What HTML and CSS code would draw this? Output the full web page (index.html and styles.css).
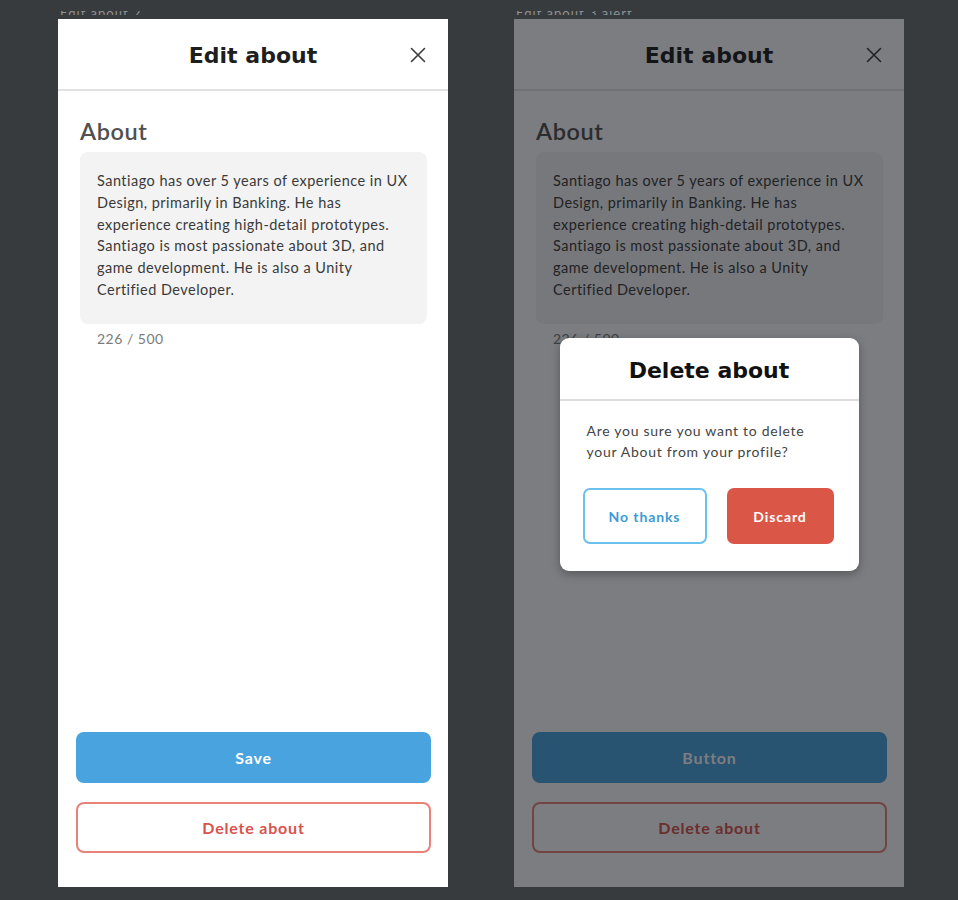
FILE: index.html
```html
<!DOCTYPE html>
<html lang="en">
<head>
<meta charset="utf-8">
<title>Edit about</title>
<link rel="stylesheet" href="styles.css">
</head>
<body>
<div class="board">
  <section class="col">
    <div class="frame-label">Edit about 2</div>
    <div class="frame">
      <header class="top">
        <h1 class="title">Edit about</h1>
        <button class="close" aria-label="Close">
          <svg width="16" height="16" viewBox="0 0 16 16"><path d="M1.5 1.5L14.5 14.5M14.5 1.5L1.5 14.5" stroke="#3a3a3a" stroke-width="1.6" stroke-linecap="round"/></svg>
        </button>
      </header>
      <div class="content">
        <h2 class="section">About</h2>
        <div class="textarea">Santiago has over 5 years of experience in UX Design, primarily in Banking. He has experience creating high-detail prototypes. Santiago is most passionate about 3D, and game development. He is also a Unity Certified Developer.</div>
        <div class="counter">226 / 500</div>
        <div class="actions">
          <button class="btn primary">Save</button>
          <button class="btn danger-outline">Delete about</button>
        </div>
      </div>
    </div>
  </section>

  <section class="col">
    <div class="frame-label">Edit about 3 alert</div>
    <div class="frame">
      <header class="top">
        <h1 class="title">Edit about</h1>
        <button class="close" aria-label="Close">
          <svg width="16" height="16" viewBox="0 0 16 16"><path d="M1.5 1.5L14.5 14.5M14.5 1.5L1.5 14.5" stroke="#3a3a3a" stroke-width="1.6" stroke-linecap="round"/></svg>
        </button>
      </header>
      <div class="content">
        <h2 class="section">About</h2>
        <div class="textarea">Santiago has over 5 years of experience in UX Design, primarily in Banking. He has experience creating high-detail prototypes. Santiago is most passionate about 3D, and game development. He is also a Unity Certified Developer.</div>
        <div class="counter">226 / 500</div>
        <div class="actions">
          <button class="btn primary">Button</button>
          <button class="btn danger-outline">Delete about</button>
        </div>
      </div>
      <div class="overlay">
        <div class="modal" role="dialog">
          <div class="modal-head">Delete about</div>
          <div class="modal-body">
            <p class="modal-text">Are you sure you want to delete<br>your About from your profile?</p>
            <div class="modal-actions">
              <button class="mbtn ghost">No thanks</button>
              <button class="mbtn discard">Discard</button>
            </div>
          </div>
        </div>
      </div>
    </div>
  </section>
</div>
</body>
</html>
```

FILE: styles.css
```css
* { box-sizing: border-box; }

html, body {
  margin: 0;
  padding: 0;
}

body {
  width: 958px;
  height: 900px;
  overflow: hidden;
  background: #383b3e;
  font-family: "Lato", "Noto Sans", sans-serif;
}

.board {
  display: flex;
  gap: 66px;
  padding-left: 58px;
}

.col {
  display: flex;
  flex-direction: column;
}

.frame-label {
  height: 4px;
  margin: 11px 0 4px 2px;
  overflow: hidden;
  font-size: 13px;
  line-height: 4px;
  color: #8d9093;
  letter-spacing: 1px;
}

.frame {
  position: relative;
  width: 390px;
  height: 868px;
  background: #fff;
  display: flex;
  flex-direction: column;
  overflow: hidden;
}

.top {
  position: relative;
  height: 72px;
  border-bottom: 2px solid #e2e2e2;
  display: flex;
  align-items: center;
  justify-content: center;
}

.title {
  margin: 0;
  padding-top: 2px;
  font-family: "DejaVu Sans", "Inter", sans-serif;
  font-weight: 700;
  font-size: 22px;
  color: #1e1e1e;
}

.close {
  position: absolute;
  right: 22px;
  top: 28px;
  padding: 0;
  border: 0;
  background: none;
  width: 16px;
  height: 16px;
  display: flex;
}

.content {
  flex: 1;
  display: flex;
  flex-direction: column;
  padding: 26px 17px 34px 18px;
}

.section {
  margin: 0 0 7px 4px;
  font-size: 23.5px;
  line-height: 28px;
  font-weight: 600;
  color: #505050;
  letter-spacing: 0.6px;
}

.textarea {
  margin-left: 4px;
  margin-right: 4px;
  background: #f3f3f3;
  border-radius: 8px;
  padding: 18px 15px 23px 17px;
  font-size: 14.5px;
  line-height: 21.8px;
  letter-spacing: 0.47px;
  color: #3a3a3a;
}

.counter {
  margin: 5px 0 0 21px;
  font-size: 14px;
  line-height: 20px;
  letter-spacing: 0.5px;
  color: #7b7b7b;
}

.actions {
  margin-top: auto;
  display: flex;
  flex-direction: column;
  gap: 19px;
}

.btn {
  height: 51px;
  border-radius: 8px;
  font-family: "Lato", "Noto Sans", sans-serif;
  font-weight: 700;
  font-size: 16px;
  letter-spacing: 0.8px;
  cursor: pointer;
}

.primary {
  background: #49a3de;
  border: 0;
  color: #fff;
}

.danger-outline {
  background: #fff;
  border: 2px solid #e88278;
  color: #d9534c;
}

.overlay {
  position: absolute;
  inset: 0;
  background: rgba(13, 15, 20, 0.54);
  display: flex;
  align-items: center;
  justify-content: center;
  padding-top: 3px;
}

.modal {
  width: 299px;
  background: #fff;
  border-radius: 9px;
  box-shadow: 0 3px 10px rgba(0, 0, 0, 0.3);
  overflow: hidden;
}

.modal-head {
  height: 63px;
  padding-top: 3px;
  border-bottom: 2px solid #dcdcdc;
  display: flex;
  align-items: center;
  justify-content: center;
  font-family: "DejaVu Sans", "Inter", sans-serif;
  font-weight: 700;
  font-size: 22px;
  color: #111;
}

.modal-body {
  padding: 19px 25px 27px 23px;
}

.modal-text {
  margin: 0 0 26px 4px;
  font-size: 14px;
  line-height: 21px;
  letter-spacing: 0.72px;
  color: #444;
}

.modal-actions {
  display: flex;
  gap: 20px;
}

.mbtn {
  height: 56px;
  border-radius: 7px;
  font-family: "Lato", "Noto Sans", sans-serif;
  font-weight: 700;
  font-size: 14px;
  letter-spacing: 0.9px;
  cursor: pointer;
}

.ghost {
  width: 124px;
  background: #fff;
  border: 2px solid #6cc0ee;
  color: #3d9ad6;
}

.discard {
  width: 107px;
  background: #da5748;
  border: 0;
  color: #fff;
}
```
